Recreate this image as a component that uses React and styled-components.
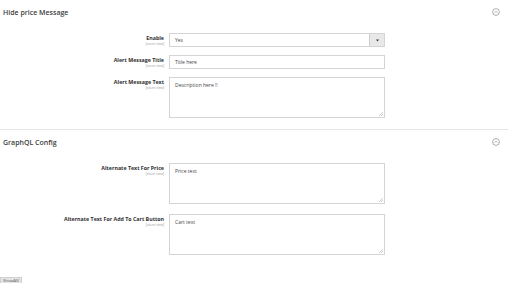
import React from "react";
import styled, { createGlobalStyle } from "styled-components";

const GlobalStyle = createGlobalStyle`
  html, body {
    margin: 0;
    padding: 0;
    background: #fff;
  }
  body {
    font-family: "Open Sans", "Liberation Sans", sans-serif;
    color: #303030;
    overflow: hidden;
  }
`;

const Page = styled.div`
  width: 512px;
  height: 283px;
  display: flex;
  flex-direction: column;
`;

const Section = styled.section`
  display: flex;
  flex-direction: column;
  border-bottom: ${(p) => (p.$divider ? "1px solid #e6e6e6" : "none")};
  padding-bottom: ${(p) => (p.$divider ? "11px" : "0")};
  margin-right: 4px;
`;

const SectionHead = styled.div`
  height: 24px;
  display: flex;
  align-items: center;
  justify-content: space-between;
  padding: 0 8px 0 3px;
  .title {
    font-size: 7px;
    font-weight: 600;
    color: #3d3d3d;
  }
`;

const Rows = styled.div`
  display: flex;
  flex-direction: column;
  gap: ${(p) => p.$gap}px;
  padding-top: ${(p) => p.$top}px;
`;

const Row = styled.div`
  display: flex;
  align-items: flex-start;
  gap: 5px;
`;

const Label = styled.div`
  width: 164px;
  text-align: right;
  padding-top: 2px;
  display: flex;
  flex-direction: column;
  align-items: flex-end;
  .name {
    font-size: 5.3px;
    font-weight: 700;
    line-height: 7px;
    color: #303030;
  }
  .scope {
    font-size: 3.4px;
    line-height: 4px;
    color: #999;
  }
`;

const Field = styled.div`
  width: 216px;
  height: ${(p) => p.$h}px;
  border: 1px solid #d4d4d4;
  background: #fff;
  font-size: 5px;
  color: #444;
  padding: ${(p) => (p.$multi ? "4px 5px" : "0 5px")};
  box-sizing: border-box;
  display: flex;
  align-items: ${(p) => (p.$multi ? "flex-start" : "center")};
  position: relative;
  line-height: 6px;
`;

const SelectBox = styled(Field)`
  padding-right: 0;
  justify-content: space-between;
  align-items: stretch;
  .value {
    display: flex;
    align-items: center;
  }
  .btn {
    width: 14px;
    border-left: 1px solid #cfcfcf;
    background: #e8e8e8;
    display: flex;
    align-items: center;
    justify-content: center;
  }
`;

const Grip = styled.svg`
  position: absolute;
  right: 1px;
  bottom: 1px;
`;

const Tag = styled.div`
  margin-top: auto;
  align-self: flex-start;
  background: #e4e4e4;
  border: 1px solid #d0d0d0;
  border-bottom: none;
  font-size: 4px;
  line-height: 5px;
  color: #555;
  padding: 0 2px;
  height: 5px;
  overflow: hidden;
`;

const Collapse = () => (
  <svg width="8" height="8" viewBox="0 0 8 8">
    <circle cx="4" cy="4" r="3.4" fill="none" stroke="#8a8a8a" strokeWidth="0.7" />
    <path d="M2.5 4.6 L4 3.1 L5.5 4.6" fill="none" stroke="#8a8a8a" strokeWidth="0.7" />
  </svg>
);

const ResizeGrip = () => (
  <Grip width="4" height="4" viewBox="0 0 4 4">
    <path d="M4 0 L0 4 M4 2 L2 4" stroke="#aaa" strokeWidth="0.6" />
  </Grip>
);

const FormRow = ({ label, children }) => (
  <Row>
    <Label>
      <span className="name">{label}</span>
      <span className="scope">[store view]</span>
    </Label>
    {children}
  </Row>
);

const TextBox = ({ text, h = 14 }) => (
  <Field $h={h}>{text}</Field>
);

const TextArea = ({ text, h = 41 }) => (
  <Field $h={h} $multi>
    {text}
    <ResizeGrip />
  </Field>
);

export default function App() {
  return (
    <Page>
      <GlobalStyle />
      <Section $divider>
        <SectionHead>
          <span className="title">Hide price Message</span>
          <Collapse />
        </SectionHead>
        <Rows $gap={8} $top={9}>
          <FormRow label="Enable">
            <SelectBox $h={14}>
              <span className="value">Yes</span>
              <span className="btn">
                <svg width="3" height="3" viewBox="0 0 3 3">
                  <path d="M0 0.5 H3 L1.5 2.5 Z" fill="#333" />
                </svg>
              </span>
            </SelectBox>
          </FormRow>
          <FormRow label="Alert Message Title">
            <TextBox text="Title here" />
          </FormRow>
          <FormRow label="Alert Message Text">
            <TextArea text="Description here !!" />
          </FormRow>
        </Rows>
      </Section>
      <Section>
        <SectionHead>
          <span className="title">GraphQL Config</span>
          <Collapse />
        </SectionHead>
        <Rows $gap={10} $top={9}>
          <FormRow label="Alternate Text For Price">
            <TextArea text="Price text" />
          </FormRow>
          <FormRow label="Alternate Text For Add To Cart Button">
            <TextArea text="Cart text" />
          </FormRow>
        </Rows>
      </Section>
      <Tag>ShowAll/</Tag>
    </Page>
  );
}
